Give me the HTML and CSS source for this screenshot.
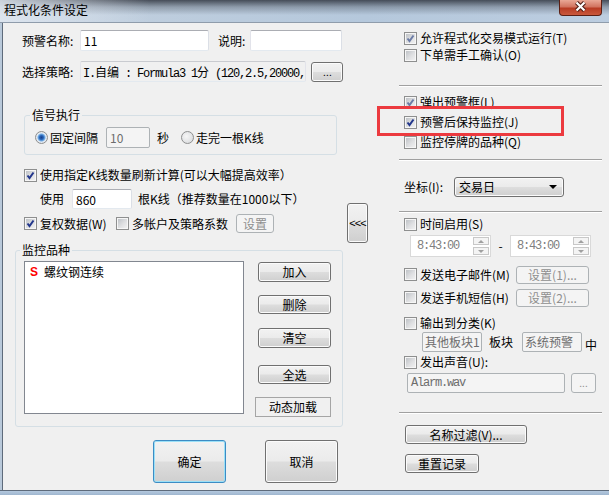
FILE: index.html
```html
<!DOCTYPE html>
<html>
<head>
  <meta charset="utf-8">
  <title>程式化条件设定</title>
  <link rel="stylesheet" href="styles.css">
</head>
<body>
  <div class="window">
    <div class="titlebar">
      <span class="title">程式化条件设定</span>
      <div class="close-btn">
        <svg width="43" height="16" viewBox="0 0 43 16">
          <path class="x-out" d="M17.5 3.5l8 8M25.5 3.5l-8 8"/>
          <path class="x-in" d="M17.5 3.5l8 8M25.5 3.5l-8 8"/>
        </svg>
      </div>
    </div>

    <div class="client">
      <!-- left side -->
      <div class="left">
        <div class="row r-name">
          <span class="w58">预警名称:</span>
          <input class="edit e-name" value="11">
          <span class="l-desc">说明:</span>
          <input class="edit e-desc" value="">
        </div>

        <div class="row r-strategy">
          <span class="w58">选择策略:</span>
          <div class="edit ro mono e-strategy">I.<span class="cjk">自编</span> : Formula3 1<span class="cjk">分</span> (120,2.5,20000,</div>
          <button class="btn b-browse">. . .</button>
        </div>

        <fieldset class="group g-signal">
          <legend>信号执行</legend>
          <div class="row r-signal">
            <span class="radio on"></span><span class="rlabel">固定间隔</span>
            <input class="edit dis e-interval" value="10" disabled>
            <span class="sec">秒</span>
            <span class="radio r2"></span><span class="rlabel">走完一根K线</span>
          </div>
        </fieldset>

        <div class="check r-kline">
          <span class="cb on"><svg width="11" height="11" viewBox="0 0 11 11"><path d="M2.5 5.5L4.5 8L8.5 2.5"/></svg></span>使用指定K线数量刷新计算(可以大幅提高效率）
        </div>

        <div class="row r-use">
          <span>使用</span>
          <input class="edit e-count" value="860">
          <span class="l-count">根K线（推荐数量在1000以下）</span>
        </div>

        <div class="row r-adj">
          <div class="check w92"><span class="cb on"><svg width="11" height="11" viewBox="0 0 11 11"><path d="M2.5 5.5L4.5 8L8.5 2.5"/></svg></span>复权数据(W)</div>
          <div class="check w120"><span class="cb"></span>多帐户及策略系数</div>
          <button class="btn dis b-coef" disabled>设置</button>
        </div>

        <fieldset class="group g-watch">
          <legend>监控品种</legend>
          <div class="watch-body">
            <div class="listbox">
              <div class="item"><span class="s">S</span>螺纹钢连续</div>
            </div>
            <div class="list-btns">
              <button class="btn lb b-add">加入</button>
              <button class="btn lb b-del">删除</button>
              <button class="btn lb b-clear">清空</button>
              <button class="btn lb b-all">全选</button>
              <button class="flat-btn">动态加载</button>
            </div>
          </div>
        </fieldset>

        <div class="row r-ok">
          <button class="btn default b-big">确定</button>
          <button class="btn b-big b-cancel">取消</button>
        </div>
      </div>

      <!-- collapse button -->
      <div class="mid">
        <button class="btn b-collapse">&lt;&lt;&lt;</button>
      </div>

      <!-- right side -->
      <div class="right">
        <div class="check r-a"><span class="cb on soft"><svg width="11" height="11" viewBox="0 0 11 11"><path d="M2.5 5.5L4.5 8L8.5 2.5"/></svg></span>允许程式化交易模式运行(T)</div>
        <div class="check r-b"><span class="cb"></span>下单需手工确认(O)</div>
        <div class="sep s1"></div>

        <div class="check r-c"><span class="cb on soft"><svg width="11" height="11" viewBox="0 0 11 11"><path d="M2.5 5.5L4.5 8L8.5 2.5"/></svg></span>弹出预警框(L)</div>
        <div class="check r-d"><span class="cb on"><svg width="11" height="11" viewBox="0 0 11 11"><path d="M2.5 5.5L4.5 8L8.5 2.5"/></svg></span>预警后保持监控(J)</div>
        <div class="check r-e"><span class="cb"></span>监控停牌的品种(Q)</div>
        <div class="sep s2"></div>

        <div class="row r-axis">
          <span class="w50">坐标(I):</span>
          <div class="combo">交易日<span class="arrow"></span></div>
        </div>
        <div class="sep s3"></div>

        <div class="check r-time"><span class="cb"></span>时间启用(S)</div>
        <div class="row r-spin">
          <div class="spin"><span class="mono">8:43:00</span><span class="spin-btns"><span class="up"></span><span class="down"></span></span></div>
          <span class="dash">-</span>
          <div class="spin"><span class="mono">8:43:00</span><span class="spin-btns"><span class="up"></span><span class="down"></span></span></div>
        </div>

        <div class="row r-mail">
          <div class="check w112"><span class="cb"></span>发送电子邮件(M)</div>
          <button class="btn dis b-set" disabled>设置(1)...</button>
        </div>
        <div class="row r-sms">
          <div class="check w112"><span class="cb"></span>发送手机短信(H)</div>
          <button class="btn dis b-set" disabled>设置(2)...</button>
        </div>

        <div class="check r-out"><span class="cb"></span>输出到分类(K)</div>
        <div class="row r-cat">
          <div class="edit dis e-cat">其他板块1</div>
          <span class="l-plate">板块</span>
          <div class="edit dis e-cat e-cat2">系统预警</div>
          <span class="l-mid">中</span>
        </div>

        <div class="check r-sound"><span class="cb"></span>发出声音(U):</div>
        <div class="row r-wav">
          <div class="edit dis mono e-wav">Alarm.wav</div>
          <button class="btn dis b-wav" disabled>...</button>
        </div>
        <div class="sep s4"></div>

        <button class="btn b-filter">名称过滤(V)...</button>
        <button class="btn b-reset">重置记录</button>

        <div class="highlight"></div>
      </div>
    </div>

    <div class="frame-bottom"></div>
  </div>
</body>
</html>
```

FILE: styles.css
```css
* {
  box-sizing: border-box;
}

body {
  margin: 0;
  font: 12px/14px "Noto Sans CJK SC", "Noto Sans", sans-serif;
  color: #000;
  background: #f0f0f0;
}

.window {
  width: 609px;
  height: 495px;
  display: flex;
  flex-direction: column;
  background: #b9c9da;
  overflow: hidden;
}

/* title bar */
.titlebar {
  height: 23px;
  flex: none;
  display: flex;
  justify-content: space-between;
  align-items: flex-start;
  border-bottom: 1px solid #8f9cab;
  background:
    linear-gradient(to right, rgba(225, 232, 241, 0.85) 0, rgba(225, 232, 241, 0) 150px),
    linear-gradient(to bottom, rgba(40, 45, 55, 0.8) 0, rgba(40, 45, 55, 0.3) 7px, rgba(40, 45, 55, 0) 15px),
    linear-gradient(to right, #c4d1df, #b5c8dc 60%, #bccde0);
}

.title {
  padding: 3px 0 0 4px;
  line-height: 13px;
}

.close-btn {
  width: 43px;
  height: 16px;
  margin-right: 7px;
  border: 1px solid #5b1f14;
  border-top: none;
  border-radius: 0 0 4px 4px;
  background: linear-gradient(#e9a896 0%, #d27460 45%, #b83c24 55%, #c9583c 100%);
}

.close-btn svg {
  display: block;
  margin: -1px 0 0 -1px;
}

.x-out {
  stroke: #4a1a12;
  stroke-width: 4.2;
  fill: none;
}

.x-in {
  stroke: #fff;
  stroke-width: 2.2;
  fill: none;
}

/* client area */
.client {
  height: 467px;
  flex: none;
  display: flex;
  margin-left: 2px;
  border-left: 1px solid #5e6b7b;
  background: #f0f0f0;
}

.frame-bottom {
  flex: 1;
  border-top: 1px solid #5e6b7b;
  background: linear-gradient(#b4c8de, #9fb6cf);
}

.left {
  width: 343px;
  flex: none;
}

.mid {
  width: 53px;
  flex: none;
}

.right {
  flex: 1;
  position: relative;
}

.row {
  display: flex;
  align-items: center;
}

.check {
  display: flex;
  align-items: center;
  height: 14px;
  white-space: nowrap;
}

/* controls */
.edit {
  height: 21px;
  border: 1px solid #abadb3;
  border-color: #abadb3 #dbdfe6 #e3e9ef #e2e3ea;
  border-radius: 2px;
  background: #fff;
  font: inherit;
  color: #000;
  padding: 0 3px;
  line-height: 19px;
  outline: none;
}

.edit.ro {
  background: #f0f0f0;
  border-color: #c9cbd0 #e2e3ea #e3e9ef #e2e3ea;
}

.edit.dis {
  background: #f4f4f4;
  border-color: #adb2b5;
  color: #6d6d6d;
}

.mono {
  font-family: "Liberation Mono", "Noto Sans CJK SC", monospace;
  letter-spacing: -1.2px;
}

.cjk {
  font-family: "Noto Sans CJK SC", sans-serif;
  letter-spacing: 0;
}

.btn {
  font: inherit;
  color: #000;
  padding: 0;
  border: 1px solid #707070;
  border-radius: 3px;
  background: linear-gradient(#f2f2f2 0%, #ebebeb 48%, #dddddd 52%, #cfcfcf 100%);
  box-shadow: inset 0 0 0 1px #fbfbfb;
  white-space: nowrap;
}

.btn.dis {
  border-color: #adb2b5;
  background: #f4f4f4;
  color: #8f8f8f;
  box-shadow: none;
}

.btn.default {
  border-color: #3c8cc4;
  box-shadow: inset 0 0 0 1px #9be0f7;
}

.flat-btn {
  font: inherit;
  color: #000;
  padding: 0;
  border: 1px solid #a5a5a5;
  background: #f0f0f0;
}

.cb {
  width: 13px;
  height: 13px;
  flex: none;
  margin-right: 3px;
  border: 1px solid #8e8f8f;
  background: linear-gradient(135deg, #b9bdc2 0%, #dfe0e2 55%, #f4f4f4 100%);
  box-shadow: inset 0 0 0 1px #f6f6f6;
}

.cb svg {
  display: block;
}

.cb path {
  fill: none;
  stroke: #22368c;
  stroke-width: 2;
}

.cb.soft path {
  stroke: #6c7ca6;
}

.radio {
  width: 13px;
  height: 13px;
  flex: none;
  border-radius: 50%;
  border: 1px solid #8e8f8f;
  background: radial-gradient(circle at 40% 40%, #f6f6f6 0, #d4d6d9 100%);
}

.radio.on {
  background: radial-gradient(circle, #163f8c 0, #2a66b8 2px, #74aee6 3.5px, #e4ebf3 4.5px, #dfe3e8 6px);
}

.group {
  margin: 0;
  min-width: 0;
  border: 1px solid #d5dfe5;
  border-radius: 3px;
}

.group legend {
  padding: 0 2px;
  line-height: 14px;
}

/* left rows */
.r-name {
  margin: 7px 0 0 19px;
  height: 21px;
}

.w58 {
  width: 58px;
  flex: none;
}

.e-name {
  width: 129px;
}

.l-desc {
  margin-left: 9px;
  width: 32px;
}

.e-desc {
  width: 92px;
}

.r-strategy {
  margin: 10px 0 0 19px;
  height: 21px;
}

.e-strategy {
  width: 226px;
  padding-left: 2px;
  overflow: hidden;
  white-space: nowrap;
}

.b-browse {
  width: 32px;
  height: 20px;
  margin-left: 5px;
  font-size: 10px;
  letter-spacing: -1px;
}

.g-signal {
  margin: 26px 0 0 21px;
  width: 313px;
  padding: 0 10px 6px 10px;
}

.g-signal legend {
  margin-left: -5px;
}

.r-signal {
  margin-top: 5px;
  height: 21px;
}

.rlabel {
  margin-left: 2px;
}

.e-interval {
  width: 44px;
  margin-left: 8px;
  background: #f0f0f0;
  color: #838383;
}

.sec {
  margin-left: 7px;
}

.r2 {
  margin-left: 12px;
}

.r-kline {
  margin: 13px 0 0 21px;
}

.r-use {
  margin: 7px 0 0 37px;
  height: 20px;
}

.e-count {
  width: 60px;
  height: 20px;
  margin-left: 8px;
}

.l-count {
  margin-left: 6px;
}

.r-adj {
  margin: 5px 0 0 21px;
  height: 19px;
}

.w92 {
  width: 92px;
}

.w120 {
  width: 120px;
}

.b-coef {
  width: 38px;
  height: 19px;
}

.g-watch {
  margin: 10px 0 0 12px;
  width: 328px;
  padding: 4px 8px 9px 8px;
}

.g-watch legend {
  margin-left: -4px;
}

.watch-body {
  display: flex;
  align-items: flex-start;
}

.listbox {
  width: 220px;
  height: 153px;
  flex: none;
  border: 1px solid #828790;
  background: #fff;
  padding: 3px 0 0 5px;
}

.item {
  display: flex;
  align-items: center;
  height: 14px;
}

.item .s {
  color: #f00;
  font-family: "Liberation Sans", sans-serif;
  font-weight: bold;
  margin-right: 6px;
}

.list-btns {
  margin-left: 14px;
  display: flex;
  flex-direction: column;
  align-items: flex-start;
}

.lb {
  width: 73px;
}

.b-add {
  margin-top: 1px;
  height: 20px;
}

.b-del {
  margin-top: 13px;
  height: 19px;
}

.b-clear {
  margin-top: 14px;
  height: 20px;
}

.b-all {
  margin-top: 17px;
  height: 19px;
}

.flat-btn {
  margin: 13px 0 0 -3px;
  width: 76px;
  height: 20px;
}

.r-ok {
  margin: 13px 0 0 150px;
}

.b-big {
  width: 73px;
  height: 43px;
}

.b-cancel {
  margin-left: 39px;
}

/* collapse */
.b-collapse {
  margin: 180px 0 0 1px;
  width: 21px;
  height: 40px;
  font: 11px "Liberation Sans", sans-serif;
  letter-spacing: -1px;
}

/* right rows */
.r-a {
  margin: 8px 0 0 5px;
}

.r-b {
  margin: 3px 0 0 5px;
}

.sep {
  width: 203px;
  height: 2px;
  border-top: 1px solid #a0a0a0;
  border-bottom: 1px solid #fff;
}

.s1 {
  margin-top: 23px;
}

.r-c {
  margin: 8px 0 0 5px;
}

.r-d,
.r-e {
  margin: 6px 0 0 5px;
}

.s2 {
  margin-top: 10px;
}

.r-axis {
  margin: 16px 0 0 5px;
  height: 20px;
}

.w50 {
  width: 50px;
}

.combo {
  width: 110px;
  height: 20px;
  display: flex;
  align-items: center;
  padding-left: 4px;
  border: 1px solid #707070;
  border-radius: 3px;
  background: linear-gradient(#f2f2f2 0%, #ebebeb 48%, #dddddd 52%, #cfcfcf 100%);
  box-shadow: inset 0 0 0 1px #fbfbfb;
}

.arrow {
  margin-left: auto;
  margin-right: 6px;
  border-left: 4px solid transparent;
  border-right: 4px solid transparent;
  border-top: 4px solid #000;
}

.s3 {
  margin-top: 14px;
}

.r-time {
  margin: 4px 0 0 5px;
}

.r-spin {
  margin: 4px 0 0 11px;
  height: 22px;
}

.spin {
  width: 81px;
  height: 22px;
  display: flex;
  align-items: center;
  padding-left: 6px;
  border: 1px solid #d9d9d9;
  background: #fff;
  color: #808080;
}

.spin-btns {
  margin-left: auto;
  margin-right: 1px;
  display: flex;
  flex-direction: column;
  gap: 2px;
}

.spin-btns span {
  width: 16px;
  height: 8px;
  border: 1px solid #c8c8c8;
  background: #f4f4f4;
  display: flex;
  align-items: center;
  justify-content: center;
}

.spin-btns .up::after,
.spin-btns .down::after {
  content: "";
  border-left: 3px solid transparent;
  border-right: 3px solid transparent;
}

.spin-btns .up::after {
  border-bottom: 3px solid #a0a0a0;
}

.spin-btns .down::after {
  border-top: 3px solid #a0a0a0;
}

.dash {
  width: 19px;
  text-align: center;
}

.r-mail {
  margin: 8px 0 0 5px;
  height: 19px;
}

.r-sms {
  margin: 4px 0 0 5px;
  height: 19px;
}

.w112 {
  width: 112px;
}

.b-set {
  width: 73px;
  height: 18px;
}

.r-out {
  margin: 9px 0 0 5px;
}

.r-cat {
  margin: 2px 0 0 23px;
  height: 20px;
}

.e-cat {
  width: 60px;
  height: 20px;
  padding: 0 2px;
  line-height: 18px;
  white-space: nowrap;
  overflow: hidden;
}

.l-plate {
  margin-left: 7px;
  width: 24px;
}

.e-cat2 {
  margin-left: 9px;
}

.l-mid {
  margin-left: 3px;
  align-self: flex-end;
}

.r-sound {
  margin: 3px 0 0 5px;
}

.r-wav {
  margin: 4px 0 0 8px;
  height: 20px;
}

.e-wav {
  width: 158px;
  height: 20px;
  line-height: 18px;
}

.b-wav {
  margin-left: 6px;
  width: 25px;
  height: 20px;
  font-size: 10px;
}

.s4 {
  margin-top: 19px;
}

.b-filter {
  display: block;
  margin: 11px 0 0 6px;
  width: 122px;
  height: 19px;
}

.b-reset {
  display: block;
  margin: 10px 0 0 6px;
  width: 74px;
  height: 19px;
}

/* red marker drawn over the dialog */
.highlight {
  position: absolute;
  left: -22px;
  top: 83px;
  width: 187px;
  height: 30px;
  border: 3px solid #ec3a3f;
}
```
